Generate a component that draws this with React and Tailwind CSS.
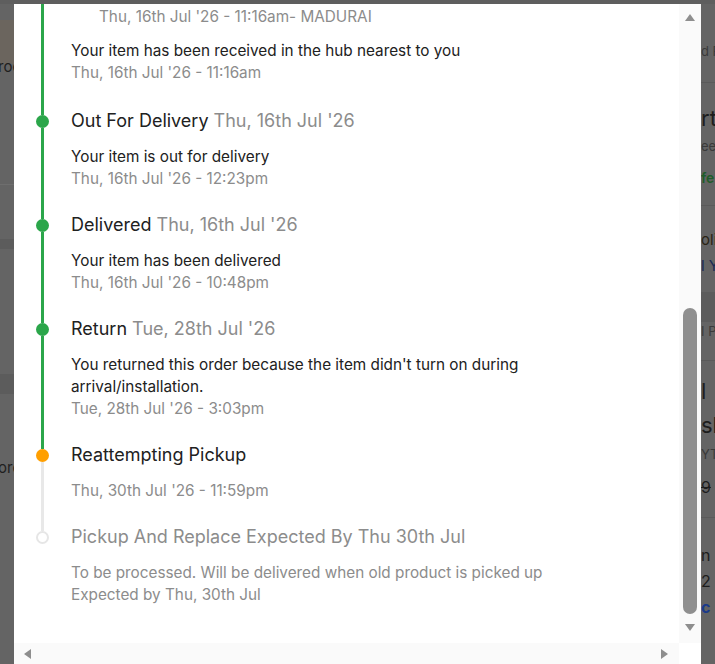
import React from 'react';

const font = { fontFamily: 'Inter, "Noto Sans", sans-serif' };

const lineColor = {
  done: 'bg-[#2ba64a]',
  pending: 'bg-[#e8e8e8]',
};

const steps = [
  {
    title: 'Out For Delivery',
    date: "Thu, 16th Jul '26",
    lines: ['Your item is out for delivery'],
    time: "Thu, 16th Jul '26 - 12:23pm",
    state: 'done',
    above: 'done',
    below: 'done',
  },
  {
    title: 'Delivered',
    date: "Thu, 16th Jul '26",
    lines: ['Your item has been delivered'],
    time: "Thu, 16th Jul '26 - 10:48pm",
    state: 'done',
    above: 'done',
    below: 'done',
  },
  {
    title: 'Return',
    date: "Tue, 28th Jul '26",
    lines: ["You returned this order because the item didn't turn on during", 'arrival/installation.'],
    time: "Tue, 28th Jul '26 - 3:03pm",
    state: 'done',
    above: 'done',
    below: 'done',
  },
  {
    title: 'Reattempting Pickup',
    date: '',
    lines: [],
    time: "Thu, 30th Jul '26 - 11:59pm",
    state: 'current',
    above: 'done',
    below: 'pending',
  },
  {
    title: 'Pickup And Replace Expected By Thu 30th Jul',
    date: '',
    lines: ['To be processed. Will be delivered when old product is picked up', 'Expected by Thu, 30th Jul'],
    time: '',
    state: 'pending',
    above: 'pending',
    below: null,
  },
];

const Dot = ({ state }) => {
  if (state === 'done') return <div className="w-[13px] h-[13px] rounded-full bg-[#2ba64a] shrink-0" />;
  if (state === 'current') return <div className="w-[13px] h-[13px] rounded-full bg-[#ff9f00] shrink-0" />;
  return <div className="w-[13px] h-[13px] rounded-full bg-white border-2 border-[#e6e6e6] shrink-0" />;
};

const Step = ({ step }) => {
  const pending = step.state === 'pending';
  return (
    <div className="flex">
      {/* gutter with connector */}
      <div className="w-[57px] shrink-0 flex flex-col items-center">
        <div className={`w-[3px] h-[6px] ${lineColor[step.above]}`} />
        <Dot state={step.state} />
        {step.below ? <div className={`w-[3px] flex-1 ${lineColor[step.below]}`} /> : <div className="flex-1" />}
      </div>
      <div className="pb-[23px]">
        <div className={`text-[18px] leading-[24px] ${pending ? 'text-[#8c8c8c]' : 'text-[#212121]'}`}>
          {step.title}
          {step.date && <span className="text-[#8c8c8c]"> {step.date}</span>}
        </div>
        <div className="mt-[13px] text-[15.3px] leading-[22px]">
          {step.lines.map(l => (
            <div key={l} className={pending ? 'text-[#8c8c8c]' : 'text-[#212121]'}>{l}</div>
          ))}
          {step.time && <div className="text-[#8c8c8c]">{step.time}</div>}
        </div>
      </div>
    </div>
  );
};

const Triangle = ({ dir }) => {
  const pts = {
    up: '0,7 5,0 10,7',
    down: '0,0 10,0 5,7',
    left: '7,0 7,10 0,5',
    right: '0,0 0,10 7,5',
  }[dir];
  const vertical = dir === 'up' || dir === 'down';
  return (
    <svg width={vertical ? 10 : 7} height={vertical ? 7 : 10} viewBox={vertical ? '0 0 10 7' : '0 0 7 10'}>
      <polygon points={pts} fill="#8e8e8e" />
    </svg>
  );
};

const LeftStrip = () => (
  <div className="w-[14px] shrink-0 flex flex-col overflow-hidden bg-[#646464]">
    <div className="h-[16px]" />
    <div className="h-[44px] bg-[#6b655e] flex items-end">
      <span className="text-[15px] text-[#1f1f1f] whitespace-nowrap -ml-[2px] leading-[18px] mb-[-12px]">roc</span>
    </div>
    <div className="h-[120px]" />
    <div className="h-px bg-[#6e6e6e]" />
    <div className="h-[54px]" />
    <div className="h-[10px] bg-[#5c5c5c]" />
    <div className="h-[125px]" />
    <div className="h-[20px] bg-[#5c5c5c]" />
    <div className="h-[65px]" />
    <div className="text-[15px] text-[#1f1f1f] whitespace-nowrap -ml-[2px] leading-[18px]">oro</div>
  </div>
);

const RightStrip = () => (
  <div className="w-[14px] shrink-0 flex flex-col overflow-hidden bg-[#646464] text-[#1d1d1d] whitespace-nowrap">
    <div className="h-[38px]" />
    <div className="text-[13px] leading-[18px] text-[#3a3a3a]">d P</div>
    <div className="h-[22px]" />
    <div className="h-px bg-[#5a5a5a]" />
    <div className="h-[22px]" />
    <div className="text-[22px] leading-[26px]">rt</div>
    <div className="h-[6px]" />
    <div className="text-[13px] leading-[18px] text-[#3a3a3a]">ee</div>
    <div className="h-[14px]" />
    <div className="text-[14px] leading-[18px] text-[#1f5c2a] font-semibold">fe</div>
    <div className="h-[18px]" />
    <div className="h-px bg-[#5a5a5a]" />
    <div className="h-[24px]" />
    <div className="text-[15px] leading-[20px] text-[#2a2416]">olic</div>
    <div className="h-[6px]" />
    <div className="text-[15px] leading-[20px] text-[#1a2a55]">l Y</div>
    <div className="h-[16px] bg-[#646464]" />
    <div className="h-[30px] bg-[#5c5c5c]" />
    <div className="text-[13px] leading-[18px] text-[#3a3a3a]">I P</div>
    <div className="h-[20px]" />
    <div className="h-px bg-[#5a5a5a]" />
    <div className="h-[16px]" />
    <div className="text-[22px] leading-[28px]">l</div>
    <div className="h-[6px]" />
    <div className="text-[22px] leading-[28px]">sh</div>
    <div className="h-[6px]" />
    <div className="text-[13px] leading-[18px] text-[#3a3a3a]">YT</div>
    <div className="h-[14px]" />
    <div className="text-[16px] leading-[20px] line-through">9</div>
    <div className="h-[20px]" />
    <div className="h-px bg-[#5a5a5a]" />
    <div className="h-[26px]" />
    <div className="text-[16px] leading-[22px]">n c</div>
    <div className="h-[4px]" />
    <div className="text-[16px] leading-[22px]">2</div>
    <div className="h-[4px]" />
    <div className="text-[16px] leading-[22px] text-[#1a3a8a] font-bold">c</div>
  </div>
);

export default function App() {
  return (
    <div className="w-[715px] h-[664px] overflow-hidden bg-[#646464] flex flex-col" style={font}>
      <div className="h-[4px] bg-[#5e5e5e] shrink-0" />
      <div className="flex flex-1 min-h-0">
        <LeftStrip />
        <div className="w-[687px] shrink-0 bg-white grid grid-cols-[665px_22px] grid-rows-[639px_21px]">
          {/* scrolled content */}
          <div className="overflow-hidden flex flex-col">
            <div className="flex">
              <div className="w-[57px] shrink-0 flex justify-center">
                <div className="w-[3px] bg-[#2ba64a]" />
              </div>
              <div className="pt-[2px] pb-[25px]">
                <div className="pl-[28px] text-[15.3px] leading-[22px] text-[#8c8c8c]">
                  Thu, 16th Jul '26 - 11:16am- MADURAI
                </div>
                <div className="mt-[12px] text-[15.3px] leading-[22px]">
                  <div className="text-[#212121]">Your item has been received in the hub nearest to you</div>
                  <div className="text-[#8c8c8c]">Thu, 16th Jul '26 - 11:16am</div>
                </div>
              </div>
            </div>
            {steps.map(s => (
              <Step key={s.title} step={s} />
            ))}
          </div>
          {/* vertical scrollbar */}
          <div className="bg-[#fafafa] flex flex-col items-center pt-[10px] pb-[12px]">
            <Triangle dir="up" />
            <div className="flex-1 w-full flex flex-col items-center justify-end pt-[6px]">
              <div className="w-[14px] h-[306px] rounded-full bg-[#8f8f8f]" />
            </div>
            <div className="mt-[10px]">
              <Triangle dir="down" />
            </div>
          </div>
          {/* horizontal scrollbar */}
          <div className="bg-[#fafafa] flex items-center justify-between pl-[10px] pr-[11px]">
            <Triangle dir="left" />
            <Triangle dir="right" />
          </div>
          <div className="bg-white" />
        </div>
        <RightStrip />
      </div>
    </div>
  );
}
